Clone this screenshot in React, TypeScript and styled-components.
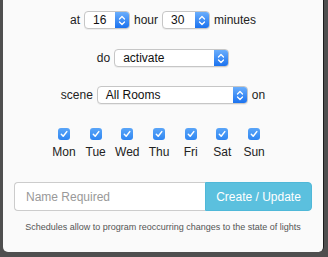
import React from 'react';
import styled, { createGlobalStyle } from 'styled-components';

const GlobalStyle = createGlobalStyle`
  html, body {
    margin: 0;
    padding: 0;
    background: #4f4f4f;
  }
  body {
    font-family: "Liberation Sans", Arial, sans-serif;
    color: #222;
  }
`;

const days = ['Mon', 'Tue', 'Wed', 'Thu', 'Fri', 'Sat', 'Sun'];

const Chevrons = () => (
  <svg width="8" height="11" viewBox="0 0 8 11">
    <path d="M1.5 4 L4 1.5 L6.5 4 M1.5 7 L4 9.5 L6.5 7" fill="none" stroke="#fff" strokeWidth="1.3" strokeLinecap="round" strokeLinejoin="round" />
  </svg>
);

const Select = ({ value, width }: { value: string; width: number }) => (
  <SelectBox $width={width}>
    <SelectText>{value}</SelectText>
    <SelectArrow>
      <Chevrons />
    </SelectArrow>
  </SelectBox>
);

export default function App() {
  return (
    <>
      <GlobalStyle />
      <Popup>
        <Row $top={11}>
          <Label>at</Label>
          <Select value="16" width={46} />
          <Label>hour</Label>
          <Select value="30" width={48} />
          <Label>minutes</Label>
        </Row>
        <Row $top={20}>
          <Label>do</Label>
          <Select value="activate" width={115} />
        </Row>
        <Row $top={19}>
          <Label>scene</Label>
          <Select value="All Rooms" width={151} />
          <Label>on</Label>
        </Row>
        <Days>
          {days.map((d) => (
            <Day key={d}>
              <Check>
                <svg width="8" height="8" viewBox="0 0 8 8">
                  <path d="M1.3 4.3 L3.2 6.2 L6.8 1.6" fill="none" stroke="#fff" strokeWidth="1.5" strokeLinecap="round" strokeLinejoin="round" />
                </svg>
              </Check>
              <DayName>{d}</DayName>
            </Day>
          ))}
        </Days>
        <InputGroup>
          <NameInput placeholder="Name Required" />
          <SubmitButton>Create / Update</SubmitButton>
        </InputGroup>
        <Help>Schedules allow to program reoccurring changes to the state of lights</Help>
      </Popup>
    </>
  );
}

const Popup = styled.div`
  margin-left: 3px;
  width: 321px;
  height: 252px;
  box-sizing: border-box;
  background: #fafafa;
  border-right: 1px solid #1c1c1c;
  border-radius: 0 0 5px 5px;
  display: flex;
  flex-direction: column;
  padding: 0 11px;
`;

const Row = styled.div<{ $top: number }>`
  margin-top: ${(p) => p.$top}px;
  display: flex;
  justify-content: center;
  align-items: center;
  gap: 4px;
  height: 18px;
`;

const Label = styled.span`
  font-size: 12px;
  color: #222;
`;

const SelectBox = styled.div<{ $width: number }>`
  width: ${(p) => p.$width}px;
  height: 18px;
  box-sizing: border-box;
  display: flex;
  align-items: stretch;
  border: 1px solid #c6c6c6;
  border-radius: 4px;
  background: #fff;
  overflow: hidden;
  box-shadow: 0 1px 0 rgba(0, 0, 0, 0.05);
`;

const SelectText = styled.span`
  flex: 1;
  font-size: 12px;
  line-height: 16px;
  padding-left: 8px;
  color: #111;
`;

const SelectArrow = styled.span`
  width: 14px;
  display: flex;
  align-items: center;
  justify-content: center;
  background: linear-gradient(#6aaefc, #1b72ef);
`;

const Days = styled.div`
  margin-top: 24px;
  display: flex;
  justify-content: center;
  padding-right: 8px;
`;

const Day = styled.div`
  width: 31.7px;
  display: flex;
  flex-direction: column;
  align-items: center;
`;

const Check = styled.span`
  width: 12px;
  height: 12px;
  border-radius: 3px;
  background: linear-gradient(#5aa5f8, #2f86f2);
  display: flex;
  align-items: center;
  justify-content: center;
`;

const DayName = styled.span`
  margin-top: 5px;
  font-size: 12px;
  line-height: 14px;
  color: #222;
`;

const InputGroup = styled.div`
  margin-top: 23px;
  display: flex;
  height: 29px;
`;

const NameInput = styled.input`
  flex: 1;
  min-width: 0;
  box-sizing: border-box;
  border: 1px solid #ccc;
  border-right: none;
  border-radius: 4px 0 0 4px;
  padding: 0 11px;
  font-family: "Liberation Sans", Arial, sans-serif;
  font-size: 12px;
  background: #fff;
  outline: none;
  &::placeholder {
    color: #999;
  }
`;

const SubmitButton = styled.button`
  width: 107px;
  box-sizing: border-box;
  border: 1px solid #4fb8d8;
  border-radius: 0 4px 4px 0;
  background: #5bc0de;
  color: #fff;
  font-family: "Liberation Sans", Arial, sans-serif;
  font-size: 12px;
  padding: 0;
`;

const Help = styled.p`
  margin: 11px 0 0;
  text-align: center;
  font-size: 9px;
  color: #555;
`;
